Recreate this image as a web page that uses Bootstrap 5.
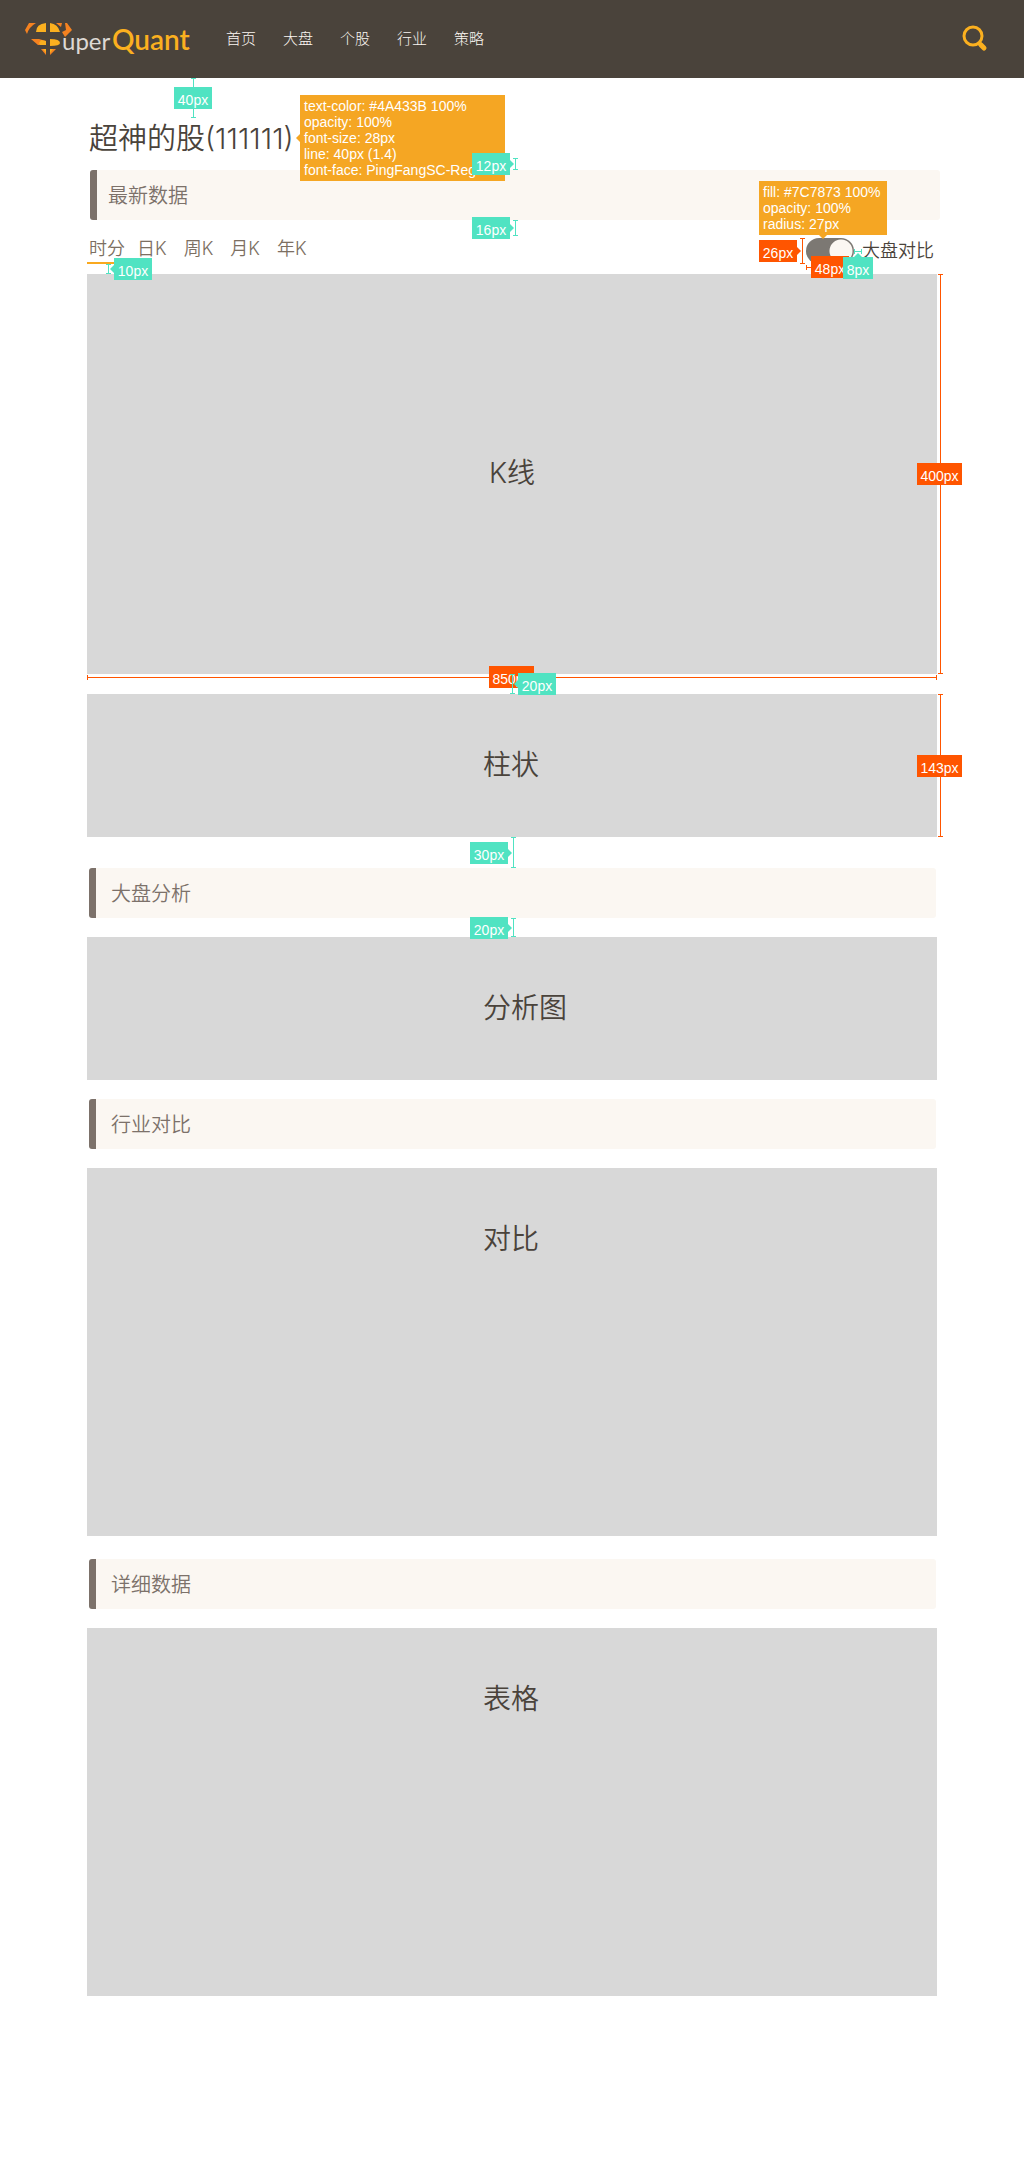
<!DOCTYPE html>
<html lang="zh-CN">
<head>
<meta charset="utf-8">
<meta name="viewport" content="width=device-width, initial-scale=1">
<title>SuperQuant</title>
<link href="https://cdn.jsdelivr.net/npm/bootstrap@5.3.0/dist/css/bootstrap.min.css" rel="stylesheet">
<style>
body{font-family:Inter,"Noto Sans CJK SC",sans-serif;font-weight:300;color:#4a433b;background:#fff}
.topbar{background:#4a433b;min-height:78px;padding:0 36px 0 24px}
.brand-art{display:block}
.topbar .nav{gap:27px;margin-left:34px}
.topbar .nav-link{padding:0;font-size:15px;line-height:24px;color:#fbf7f2}
.board{max-width:850px}
.headline{padding:41px 0 11px 2px}
.headline h1{font-size:29px;line-height:40px;font-weight:350;margin:0}
.bar-title{height:50px;margin:0 1px 19px 2px;padding:1px 15px 0;border-left:7px solid #7c716a;border-radius:3px;background:#fbf7f2;color:#7c716a;font-size:20px;line-height:50px;font-weight:350}
.bar-title.bar-first{margin:0 -3px 0 3px;padding-left:11px}
.toolrow{height:54px;z-index:2}
.periods{gap:17px;padding-top:14px}
.periods .nav-link{padding:1px 0 0;border:0;font-size:18px;line-height:28px;font-weight:350;color:#7c6f62;border-radius:0;background:none}
.periods .nav-link.active{padding:1px 0 0 2px;margin-right:-5px;line-height:27px;border-bottom:2px solid #f9a91f}
.compare{gap:8px;padding:18px 3px 0 0}
.compare label{font-size:18px;line-height:26px;font-weight:350}
.compare .form-check-input{width:48px;height:26px;margin:0;border:0;border-radius:27px;background:radial-gradient(circle 12px at 35px 13px,#fbf7f2 0 11px,#7c7873 12px) #7c7873}
.panel{background:#d8d8d8;display:flex;justify-content:center;font-size:28px;line-height:40px;font-weight:350}
.panel-k{height:400px;padding-top:179px}
.panel-s{height:143px;padding-top:51px}
.panel-l{height:368px;padding-top:51px}
.panel-name{width:58px;white-space:nowrap}
.block-k{z-index:1;margin-bottom:20px}
.block-bars{margin-bottom:31px}
.block-analysis{margin-bottom:19px}
.block-industry{margin-bottom:23px}
/* design annotations */
.tag,.info,.dim-v,.dim-h{position:absolute;--c:#50e3c2}
.tag,.info{font-family:"Liberation Sans",Arial,sans-serif;font-weight:400;font-size:14px;line-height:16px;color:#fff;background:var(--c);white-space:nowrap}
.tag{width:38px;height:22px;padding:5px 0 0;text-align:center}
.info{--c:#f5a623;padding:3px 4px}
.red{--c:#ff5500}
.wide{width:45px}
.dim-v{width:5px;border:solid var(--c);border-width:1px 0;background:linear-gradient(var(--c),var(--c)) center/1px 100% no-repeat}
.dim-h{height:5px;border:solid var(--c);border-width:0 1px;background:linear-gradient(var(--c),var(--c)) center/100% 1px no-repeat}
.tip-r::after,.tip-l::after,.tip-u::after,.tip-d::after{content:"";position:absolute;border:4px solid transparent}
.tip-r::after{left:100%;top:50%;margin-top:-4px;border-left-color:var(--c);border-right:0}
.tip-l::after{right:100%;top:50%;margin-top:-4px;border-right-color:var(--c);border-left:0}
.tip-u::after{bottom:100%;left:50%;margin-left:-4px;border-bottom-color:var(--c);border-top:0}
.tip-d::after{top:100%;left:50%;margin-left:-4px;border-top-color:var(--c);border-bottom:0}
.v-top{left:104px;top:0;height:40px}.t-top{left:87px;top:9px}
.i-text{left:213px;top:17px;width:205px}
.t-head{left:385px;top:75px}.v-head{left:426px;top:80px;height:12px}
.t-row{left:385px;top:-3px}.v-row{left:426px;top:0;height:16px}
.t-under{left:27px;top:38px}.v-under{left:19px;top:44px;height:10px}
.i-fill{right:50px;top:-39px;width:128px}
.t-26{right:140px;top:20px}.v-26{right:132px;top:18px;height:26px}
.h-48{right:83px;top:45px;width:48px}.t-48{right:88px;top:36px}
.h-8{right:75px;top:29px;width:8px}.t-8{right:64px;top:37px;width:30px}
.v-side{right:-6px;top:0;height:100%}.t-400{right:-25px;top:189px}.t-143{right:-25px;top:61px}
.h-850{left:0;right:0;top:401px}.t-850{left:402px;top:392px}
.v-gap{left:423px;top:400px;height:20px}.t-gap{left:431px;top:399px}
.t-30{left:383px;top:148px}.v-30{left:424px;top:143px;height:31px}
.t-20{left:383px;top:49px}.v-20{left:424px;top:50px;height:19px}
</style>
</head>
<body>
<header class="topbar d-flex align-items-center">
  <a href="#" aria-label="SuperQuant">
    <svg class="brand-art" width="168" height="40" viewBox="25 18 168 40">
      <g fill="#f58220"><path d="M30 22h7q-7 4-9 11l-2-4zM66 22h2l5 7-7 7-3-5 4-2zM32 38h8l7 2v4h-8zM57 22h6l-1 4z"/><path d="M42 48h5v6zM51 48h6l-6 6z"/></g>
      <g fill="#fbb01f"><path d="M37 31q0-8 10-9v9zM51 22q8 1 10 9H51zM40 42l2-3 5 1v4h-6zM51 38q10 0 10 4 0 3-10 3zM44 48h3v4zM51 48h3l-3 4z"/></g>
      <text x="63" y="49" font-family="Lato,sans-serif" font-size="24" font-weight="400" fill="#ddd9d4">uper</text>
      <text x="113" y="49" font-family="Lato,sans-serif" font-size="28" font-weight="600" fill="#fbb01f">Quant</text>
    </svg>
  </a>
  <ul class="nav">
    <li><a class="nav-link" href="#">首页</a></li>
    <li><a class="nav-link" href="#">大盘</a></li>
    <li><a class="nav-link" href="#">个股</a></li>
    <li><a class="nav-link" href="#">行业</a></li>
    <li><a class="nav-link" href="#">策略</a></li>
  </ul>
  <button class="btn p-0 border-0 ms-auto" type="button" aria-label="搜索">
    <svg class="d-block" width="27" height="28" viewBox="961 25 27 28" fill="none" stroke="#fbb01f"><circle cx="973" cy="36" r="9" stroke-width="3"/><path d="M979 43l2 2" stroke-width="4"/><path d="M981 45l3 3" stroke-width="5" stroke-linecap="round"/></svg>
  </button>
</header>
<main class="board mx-auto">
  <section class="position-relative">
    <div class="headline"><h1>超神的股(111111)</h1></div>
    <h2 class="bar-title bar-first">最新数据</h2>
    <div class="dim-v v-top"></div><div class="tag t-top">40px</div>
    <div class="info tip-l i-text">text-color: #4A433B 100%<br>opacity: 100%<br>font-size: 28px<br>line: 40px (1.4)<br>font-face: PingFangSC-Regular</div>
    <div class="tag tip-r t-head">12px</div><div class="dim-v v-head"></div>
  </section>
  <section class="toolrow position-relative d-flex justify-content-between align-items-start">
    <ul class="nav periods">
      <li><button class="nav-link active" type="button">时分</button></li>
      <li><button class="nav-link" type="button">日K</button></li>
      <li><button class="nav-link" type="button">周K</button></li>
      <li><button class="nav-link" type="button">月K</button></li>
      <li><button class="nav-link" type="button">年K</button></li>
    </ul>
    <div class="compare d-flex">
      <input class="form-check-input" type="checkbox" role="switch" id="compare" checked>
      <label for="compare">大盘对比</label>
    </div>
    <div class="tag tip-r t-row">16px</div><div class="dim-v v-row"></div>
    <div class="dim-v v-under"></div><div class="tag tip-l t-under">10px</div>
    <div class="info tip-d i-fill">fill: #7C7873 100%<br>opacity: 100%<br>radius: 27px</div>
    <div class="tag red tip-r t-26">26px</div><div class="dim-v red v-26"></div>
    <div class="dim-h red h-48"></div><div class="tag red t-48">48px</div>
    <div class="dim-h h-8"></div><div class="tag tip-u t-8">8px</div>
  </section>
  <section class="position-relative block-k">
    <div class="panel panel-k">K线</div>
    <div class="dim-v red v-side"></div><div class="tag red wide t-400">400px</div>
    <div class="dim-h red h-850"></div><div class="tag red wide t-850">850px</div>
    <div class="dim-v v-gap"></div><div class="tag tip-l t-gap">20px</div>
  </section>
  <section class="position-relative block-bars">
    <div class="panel panel-s"><span class="panel-name">柱状</span></div>
    <div class="dim-v red v-side"></div><div class="tag red wide t-143">143px</div>
    <div class="tag tip-r t-30">30px</div><div class="dim-v v-30"></div>
  </section>
  <section class="position-relative block-analysis">
    <h2 class="bar-title">大盘分析</h2>
    <div class="panel panel-s"><span class="panel-name">分析图</span></div>
    <div class="tag tip-r t-20">20px</div><div class="dim-v v-20"></div>
  </section>
  <section class="block-industry">
    <h2 class="bar-title">行业对比</h2>
    <div class="panel panel-l"><span class="panel-name">对比</span></div>
  </section>
  <section>
    <h2 class="bar-title">详细数据</h2>
    <div class="panel panel-l"><span class="panel-name">表格</span></div>
  </section>
</main>
<script src="https://cdn.jsdelivr.net/npm/bootstrap@5.3.0/dist/js/bootstrap.bundle.min.js"></script>
</body>
</html>
